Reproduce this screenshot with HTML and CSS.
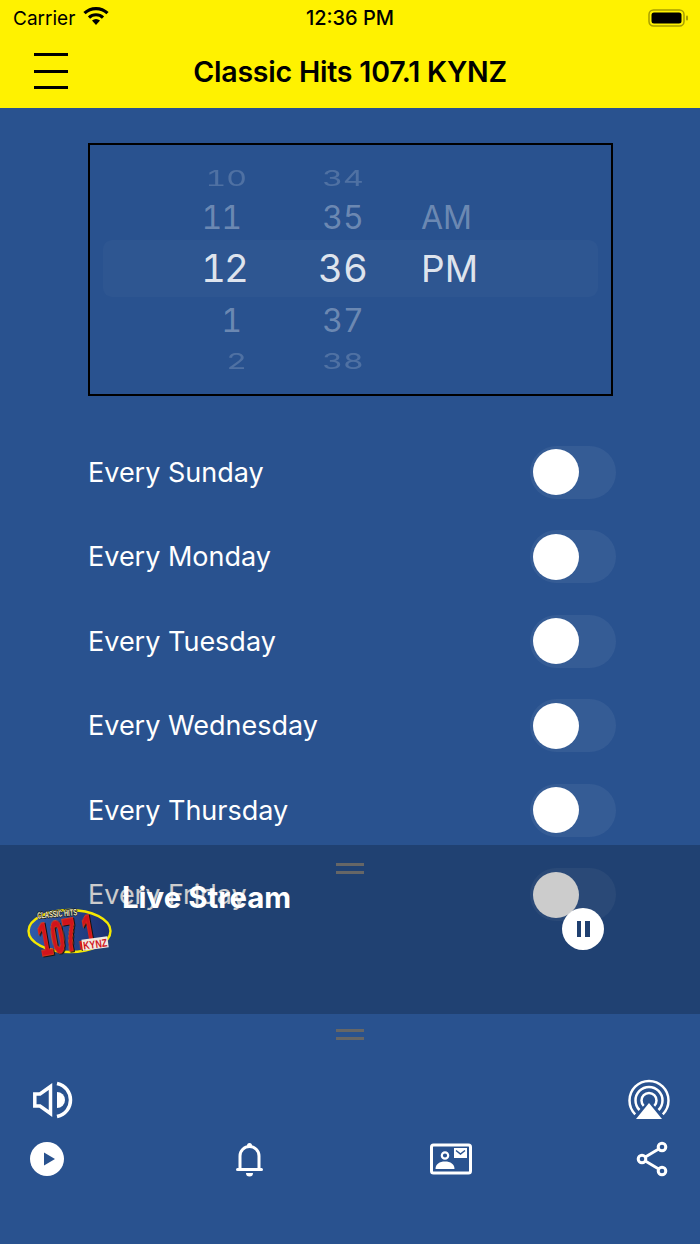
FILE: index.html
```html
<!DOCTYPE html>
<html lang="en">
<head>
    <meta charset="UTF-8">
    <meta name="viewport" content="width=device-width, initial-scale=1.0">
    <title>Classic Hits 107.1 KYNZ</title>
    <link rel="stylesheet" href="styles.css">
</head>
<body>
    <div class="app">
        <!-- Barra amarela -->
        <header class="topo">
            <div class="status">
                <div class="status-esq">
                    <span>Carrier</span>
                    <svg class="wifi" width="26" height="20" viewBox="0 0 26 20">
                        <path d="M1.5 7.2a16.5 16.5 0 0 1 23 0" fill="none" stroke="#000" stroke-width="3.2"/>
                        <path d="M6 11.6a10 10 0 0 1 14 0" fill="none" stroke="#000" stroke-width="3.2"/>
                        <path d="M9 14.6a6 6 0 0 1 8 0L13 19z" fill="#000"/>
                    </svg>
                </div>
                <span class="hora">12:36 PM</span>
                <svg class="bateria" width="42" height="20" viewBox="0 0 42 20">
                    <rect x="1" y="2" width="35" height="16" rx="4.5" fill="none" stroke="#a89f00" stroke-width="1.5"/>
                    <rect x="3.5" y="4.5" width="30" height="11" rx="2.5" fill="#000"/>
                    <rect x="38" y="7.5" width="2" height="5" rx="1" fill="#a89f00"/>
                </svg>
            </div>
            <div class="barra">
                <div class="menu"><span></span><span></span><span></span></div>
                <h1>Classic Hits 107.1 KYNZ</h1>
            </div>
        </header>

        <main class="conteudo">
            <!-- Seletor de hora -->
            <div class="picker">
                <div class="faixa"></div>
                <div class="linha longe"><span class="hr">10</span><span class="mn">34</span><span class="ap"></span></div>
                <div class="linha perto l2"><span class="hr">11</span><span class="mn">35</span><span class="ap">AM</span></div>
                <div class="linha atual"><span class="hr">12</span><span class="mn">36</span><span class="ap">PM</span></div>
                <div class="linha perto l4"><span class="hr">1</span><span class="mn">37</span><span class="ap"></span></div>
                <div class="linha longe l5"><span class="hr">2</span><span class="mn">38</span><span class="ap"></span></div>
            </div>

            <ul class="dias">
                <li>Every Sunday<div class="toggle"><i></i></div></li>
                <li>Every Monday<div class="toggle"><i></i></div></li>
                <li>Every Tuesday<div class="toggle"><i></i></div></li>
                <li>Every Wednesday<div class="toggle"><i></i></div></li>
                <li>Every Thursday<div class="toggle"><i></i></div></li>
                <li>Every Friday<div class="toggle"><i></i></div></li>
            </ul>
        </main>

        <!-- Painel do player, por cima da lista -->
        <section class="player">
            <div class="alca"><span></span><span></span></div>
            <div class="player-linha">
                <svg class="logo" width="86" height="54" viewBox="0 0 86 54">
                    <defs>
                        <linearGradient id="azul" x1="0" y1="0" x2="1" y2="0">
                            <stop offset="0" stop-color="#2f5cab"/>
                            <stop offset="1" stop-color="#1c2f6e"/>
                        </linearGradient>
                    </defs>
                    <ellipse cx="43.5" cy="26" rx="41" ry="21" fill="url(#azul)" stroke="#f5e800" stroke-width="2.4"/>
                    <text class="logo-top" x="11" y="12" transform="rotate(-5 30 8)" textLength="40" lengthAdjust="spacingAndGlyphs">CLASSIC HITS</text>
                    <text class="logo-num" x="12" y="46" transform="rotate(-10 42 30)" textLength="58" lengthAdjust="spacingAndGlyphs">107.1</text>
                    <rect x="56" y="33" width="26" height="11" fill="#f2e9e0" transform="rotate(-8 69 38)"/>
                    <text class="logo-kynz" x="57" y="43" transform="rotate(-8 69 38)" textLength="24" lengthAdjust="spacingAndGlyphs">KYNZ</text>
                </svg>
                <h2>Live Stream</h2>
                <div class="pausa"><span></span><span></span></div>
            </div>
        </section>

        <!-- Parte de baixo -->
        <footer class="rodape">
            <div class="alca alca-rodape"><span></span><span></span></div>
            <div class="rodape-linha1">
                <svg width="52" height="38" viewBox="0 0 52 38">
                    <path d="M8.8 13h5.200L24.500 5.500v27L14 25H8.800z" fill="none" stroke="#fff" stroke-width="3.5"/>
                    <path d="M31 11a8 8 0 0 1 0 16z" fill="#fff"/>
                    <path d="M31 2.500c18 4 18 29 0 33" fill="none" stroke="#fff" stroke-width="3.5"/>
                </svg>
                <svg width="52" height="42" viewBox="0 0 52 42">
                    <path d="M12.200 35.300a19.500 19.500 0 1 1 27.600 0" fill="none" stroke="#fff" stroke-width="2.500"/>
                    <path d="M16.500 31a13.500 13.500 0 1 1 19 0" fill="none" stroke="#fff" stroke-width="2.500"/>
                    <path d="M20.700 26.800a7.500 7.500 0 1 1 10.600 0" fill="none" stroke="#fff" stroke-width="2.500"/>
                    <path d="M26 24L39 40H13z" fill="#fff"/>
                </svg>
            </div>
            <div class="rodape-linha2">
                <svg width="42" height="36" viewBox="0 0 42 36">
                    <circle cx="21" cy="18" r="17" fill="#fff"/>
                    <path d="M18 11.500L29 18l-11 6.500z" fill="#29528f"/>
                </svg>
                <svg width="42" height="36" viewBox="0 0 42 36">
                    <path d="M12 27V15a9.500 9.500 0 0 1 19 0v12" fill="none" stroke="#fff" stroke-width="3"/>
                    <circle cx="21.500" cy="4.500" r="2.500" fill="#fff"/>
                    <path d="M18 32h7a3.500 3.500 0 0 1-7 0z" fill="#fff"/>
                    <path d="M9.500 28.500h24" stroke="#fff" stroke-width="3" stroke-linecap="round"/>
                </svg>
                <svg width="42" height="32" viewBox="0 0 42 32">
                    <rect x="1.500" y="2" width="39" height="28" rx="2" fill="none" stroke="#fff" stroke-width="3"/>
                    <circle cx="15" cy="12.500" r="3.200" fill="none" stroke="#fff" stroke-width="2.200"/>
                    <path d="M5.500 26c0-5 4-7.500 9.500-7.500s9.500 2.500 9.500 7.500z" fill="#fff"/>
                    <rect x="24" y="5" width="13" height="10" fill="#fff"/>
                    <path d="M26 7.500l4.500 3.500 4.500-3.500" fill="none" stroke="#29528f" stroke-width="1.500"/>
                </svg>
                <svg width="42" height="36" viewBox="0 0 42 36">
                    <path d="M10 18L30 6M10 18l20 12" stroke="#fff" stroke-width="2.800"/>
                    <circle cx="10" cy="18" r="3.800" fill="#29528f" stroke="#fff" stroke-width="3"/>
                    <circle cx="30" cy="6" r="3.800" fill="#29528f" stroke="#fff" stroke-width="3"/>
                    <circle cx="30" cy="30" r="3.800" fill="#29528f" stroke="#fff" stroke-width="3"/>
                </svg>
            </div>
        </footer>
    </div>
</body>
</html>
```

FILE: styles.css
```css
/* Estilos globais */
body {
    margin: 0;
    font-family: Inter, "Liberation Sans", sans-serif;
    background-color: #29528f;
}

.app {
    position: relative;
    width: 700px;
    height: 1244px;
    overflow: hidden;
    display: flex;
    flex-direction: column;
}

/* Barra amarela */
.topo {
    height: 108px;
    background-color: #fff200;
    color: #000;
}

.status {
    height: 36px;
    padding: 0 10px 0 13px;
    display: flex;
    align-items: center;
    justify-content: space-between;
    position: relative;
    font-size: 19px;
}

.status-esq {
    display: flex;
    align-items: center;
    gap: 8px;
}

.wifi {
    margin-top: -4px;
}

.hora {
    position: absolute;
    left: 0;
    right: 0;
    text-align: center;
    font-size: 20px;
    font-weight: 500;
}

.barra {
    height: 72px;
    position: relative;
    display: flex;
    align-items: center;
    justify-content: center;
}

.barra h1 {
    margin: -2px 0 0;
    font-size: 28.5px;
    font-weight: 600;
    letter-spacing: -0.2px;
}

.menu {
    position: absolute;
    left: 34px;
    top: 17px;
    width: 34px;
    display: flex;
    flex-direction: column;
    gap: 13.5px;
}

.menu span {
    height: 3px;
    background-color: #000;
}

/* Conteudo */
.conteudo {
    flex: 1;
    padding: 35px 84px 0 88px;
}

/* Seletor de hora */
.picker {
    position: relative;
    box-sizing: border-box;
    width: 525px;
    height: 253px;
    border: 2px solid #000;
    color: #fff;
    font-variant-numeric: tabular-nums;
}

.faixa {
    position: absolute;
    left: 13px;
    top: 95px;
    width: 495px;
    height: 57px;
    border-radius: 9px;
    background-color: rgba(255, 255, 255, 0.025);
}

.linha {
    position: relative;
    display: grid;
    grid-template-columns: 157px 160px 1fr;
    column-gap: 1px;
    align-items: center;
    line-height: 1;
}

.hr {
    text-align: right;
}

.mn {
    text-align: center;
    padding-left: 30px;
}

.ap {
    padding-left: 12px;
}

.longe {
    height: 26px;
    margin-top: 19px;
    font-size: 32px;
    transform: scaleY(0.65);
    color: rgba(255, 255, 255, 0.18);
}

.perto {
    height: 40px;
    font-size: 32px;
    color: rgba(255, 255, 255, 0.33);
}

.perto .hr {
    padding-right: 6px;
    letter-spacing: -1px;
}

.l2 {
    margin-top: 8px;
}

.atual {
    height: 58px;
    margin-top: 1px;
    font-size: 38.5px;
    color: rgba(255, 255, 255, 0.85);
}

.atual .hr {
    letter-spacing: -2px;
}

.atual .ap {
    font-size: 37px;
}

.l4 {
    margin-top: 4px;
}

.l5 {
    margin-top: 6px;
}

/* Lista de dias */
.dias {
    list-style: none;
    margin: 34px 0 0;
    padding: 0;
}

.dias li {
    height: 84.5px;
    display: flex;
    align-items: center;
    justify-content: space-between;
    font-size: 27px;
    color: #fff;
}

.toggle {
    width: 86px;
    height: 53px;
    border-radius: 27px;
    background-color: rgba(255, 255, 255, 0.06);
    display: flex;
    align-items: center;
}

.toggle i {
    width: 46px;
    height: 46px;
    margin-left: 3px;
    border-radius: 50%;
    background-color: #fff;
}

/* Player */
.player {
    position: absolute;
    left: 0;
    top: 845px;
    width: 100%;
    height: 169px;
    background-color: rgba(0, 0, 0, 0.2);
}

.alca {
    width: 28px;
    margin: 18px auto 0;
    display: flex;
    flex-direction: column;
    gap: 5px;
}

.alca span {
    height: 3px;
    background-color: #666;
}

.player-linha {
    display: flex;
    align-items: flex-start;
    padding-left: 26px;
}

.logo {
    margin-top: 31px;
    flex-shrink: 0;
    overflow: visible;
}

.player h2 {
    margin: 6px 0 0 10px;
    font-size: 29.4px;
    font-weight: 700;
    color: #fff;
}

.pausa {
    width: 42px;
    height: 42px;
    margin: 34px 96px 0 auto;
    border-radius: 50%;
    background-color: #fff;
    display: flex;
    align-items: center;
    justify-content: center;
    gap: 4px;
}

.pausa span {
    width: 4.5px;
    height: 16px;
    background-color: #204070;
}

.logo-top {
    font-family: "Liberation Sans", sans-serif;
    font-size: 9px;
    font-weight: 700;
    fill: #f3ecc0;
    stroke: #1a1a1a;
    stroke-width: 1.5px;
    paint-order: stroke;
}

.logo-num {
    font-family: "Liberation Sans", sans-serif;
    font-size: 46px;
    font-weight: 700;
    fill: #d0141c;
    stroke: #d8161c;
    stroke-width: 1.6px;
    filter: drop-shadow(0.7px 0.7px 0 #f5c800) drop-shadow(1px 1px 0 #111);
}

.logo-kynz {
    font-family: "Liberation Sans", sans-serif;
    font-size: 11px;
    font-weight: 700;
    fill: #d0141c;
}

/* Parte de baixo */
.rodape {
    position: absolute;
    left: 0;
    top: 1014px;
    width: 100%;
    height: 230px;
    background-color: #29528f;
}

.alca-rodape {
    margin-top: 15px;
}

.rodape-linha1 {
    margin-top: 39px;
    height: 42px;
    padding: 0 25px 0 26px;
    display: flex;
    align-items: center;
    justify-content: space-between;
}

.rodape-linha2 {
    margin-top: 20px;
    padding: 0 26px;
    display: flex;
    align-items: center;
    justify-content: space-between;
}
```
